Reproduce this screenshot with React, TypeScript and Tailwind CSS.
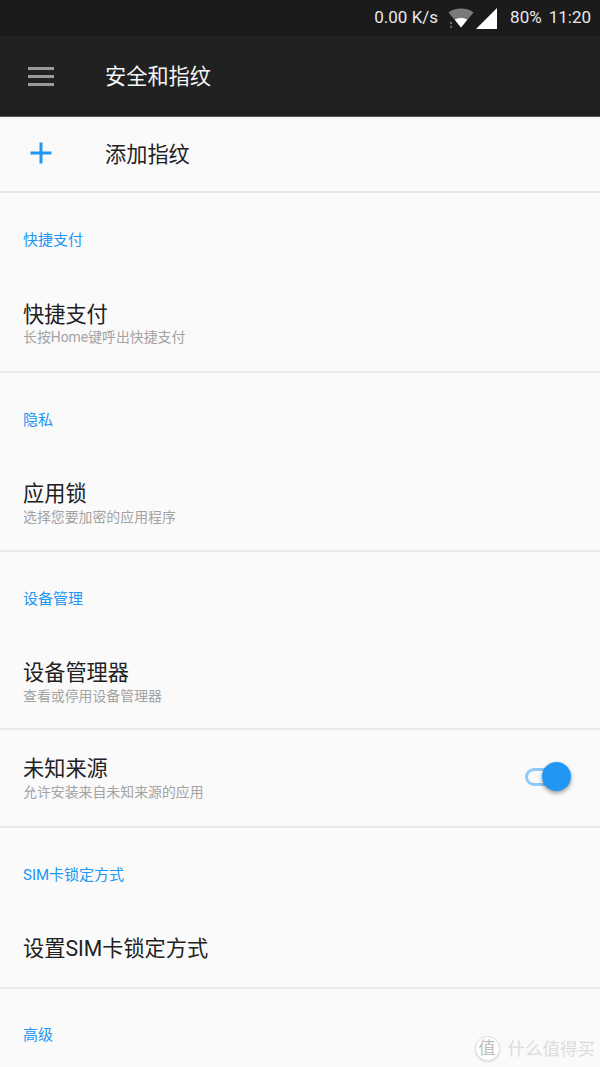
const font = { fontFamily: '"Roboto","Noto Sans CJK SC",sans-serif' };

function Header({ children, h = "h-[94px]" }: { children: React.ReactNode; h?: string }) {
  return (
    <div className={`${h} flex items-center pl-[23px]`}>
      <span className="text-[15px] leading-5 text-[#2196f3]">{children}</span>
    </div>
  );
}

function Item({ title, sub, className = "", subClass = "-mt-px" }: { title: string; sub?: string; className?: string; subClass?: string }) {
  return (
    <div className={`pl-[23px] ${className}`}>
      <div className="text-[21.2px] leading-7 text-[#212121]">{title}</div>
      {sub && <div className={`text-[13.9px] leading-5 text-[#a3a3a3] ${subClass}`}>{sub}</div>}
    </div>
  );
}

function Divider() {
  return <div className="h-0.5 bg-[#e8e8e8]" />;
}

export default function App() {
  return (
    <div className="w-[600px] h-[1067px] overflow-hidden bg-[#fafafa] relative" style={font}>
      <div className="h-9 bg-[#1b1b1b] flex items-center justify-end pr-[9px] text-[17px] text-[#e8e8e8]">
        <span>0.00 K/s</span>
        <svg width="26" height="20" viewBox="0 0 26 20" className="ml-2.5">
          <path d="M0.5 4.5C3.5 1.8 8 0.5 13 0.5s9.5 1.3 12.5 4L13 19.5z" fill="#7a7a7a" />
          <path d="M6.8 11.8C8.5 10.6 10.6 10 13 10s4.5.6 6.2 1.8L13 19.5z" fill="#fff" />
          <circle cx="3" cy="15" r="1.2" fill="#6a6a6a" />
          <circle cx="3" cy="19" r="1.2" fill="#6a6a6a" />
        </svg>
        <svg width="22" height="21" viewBox="0 0 22 21" className="ml-0.5">
          <path d="M0 21L21 0v21z" fill="#fff" />
        </svg>
        <span className="ml-3">80%</span>
        <span className="ml-[7px]">11:20</span>
      </div>
      <div className="h-20 bg-[#212121] flex items-center">
        <div className="w-[106px] pl-7 shrink-0 flex flex-col gap-[5px]">
          <div className="w-[26px] h-[3px] bg-[#9a9a9a]" />
          <div className="w-[26px] h-[3px] bg-[#9a9a9a]" />
          <div className="w-[26px] h-[3px] bg-[#9a9a9a]" />
        </div>
        <span className="text-[21.2px] text-[#f5f5f5] -ml-px pt-0.5">安全和指纹</span>
      </div>
      <div className="h-px bg-[#555555]" />
      <div className="h-[74px] flex items-center">
        <div className="w-[106px] pl-[30px] shrink-0 pb-[2px]">
          <svg width="22" height="22" viewBox="0 0 22 22" className="block">
            <path d="M11 0.5v21M0.5 11h21" stroke="#2196f3" strokeWidth="3" fill="none" />
          </svg>
        </div>
        <span className="text-[21.2px] text-[#212121] -ml-px pt-0.5">添加指纹</span>
      </div>
      <Divider />
      <Header>快捷支付</Header>
      <Item title="快捷支付" sub="长按Home键呼出快捷支付" className="h-[84px] pt-[14px]" subClass="-mt-0.5" />
      <Divider />
      <Header>隐私</Header>
      <Item title="应用锁" sub="选择您要加密的应用程序" className="h-[83px] pt-[13px]" />
      <Divider />
      <Header>设备管理</Header>
      <Item title="设备管理器" sub="查看或停用设备管理器" className="h-[82px] pt-[13px]" />
      <Divider />
      <div className="h-[96px] pl-[23px] pr-6 pt-[25px] flex justify-between">
        <div>
          <div className="text-[21.2px] leading-7 text-[#212121]">未知来源</div>
          <div className="text-[13.9px] leading-5 text-[#a3a3a3] -mt-px">允许安装来自未知来源的应用</div>
        </div>
        <div className="relative w-[46px] h-[30px] mt-[6px] mr-[5px]">
          <div className="absolute left-0 top-[7px] w-[34px] h-[18px] rounded-full border-[3px] border-[#90caf9]" />
          <div className="absolute right-0 top-[1px] w-[29px] h-[29px] rounded-full bg-[#2196f3] shadow-[0_2px_4px_rgba(0,0,0,0.4)]" />
        </div>
      </div>
      <Divider />
      <Header>SIM卡锁定方式</Header>
      <div className="h-[65px] pl-[23px] text-[21.2px] leading-7 text-[#212121] pt-[13px]">设置SIM卡锁定方式</div>
      <Divider />
      <Header h="h-[92px]">高级</Header>
      <div className="absolute right-[5px] bottom-[5px] flex items-center gap-2 text-[17.5px] text-[#dcdcdc]">
        <span className="w-[25px] h-[25px] rounded-full bg-white border border-[#e2e2e2] shadow-[0_1px_2px_rgba(0,0,0,0.15)] text-[#bdbdbd] flex items-center justify-center text-[17px]">值</span>
        <span>什么值得买</span>
      </div>
    </div>
  );
}
